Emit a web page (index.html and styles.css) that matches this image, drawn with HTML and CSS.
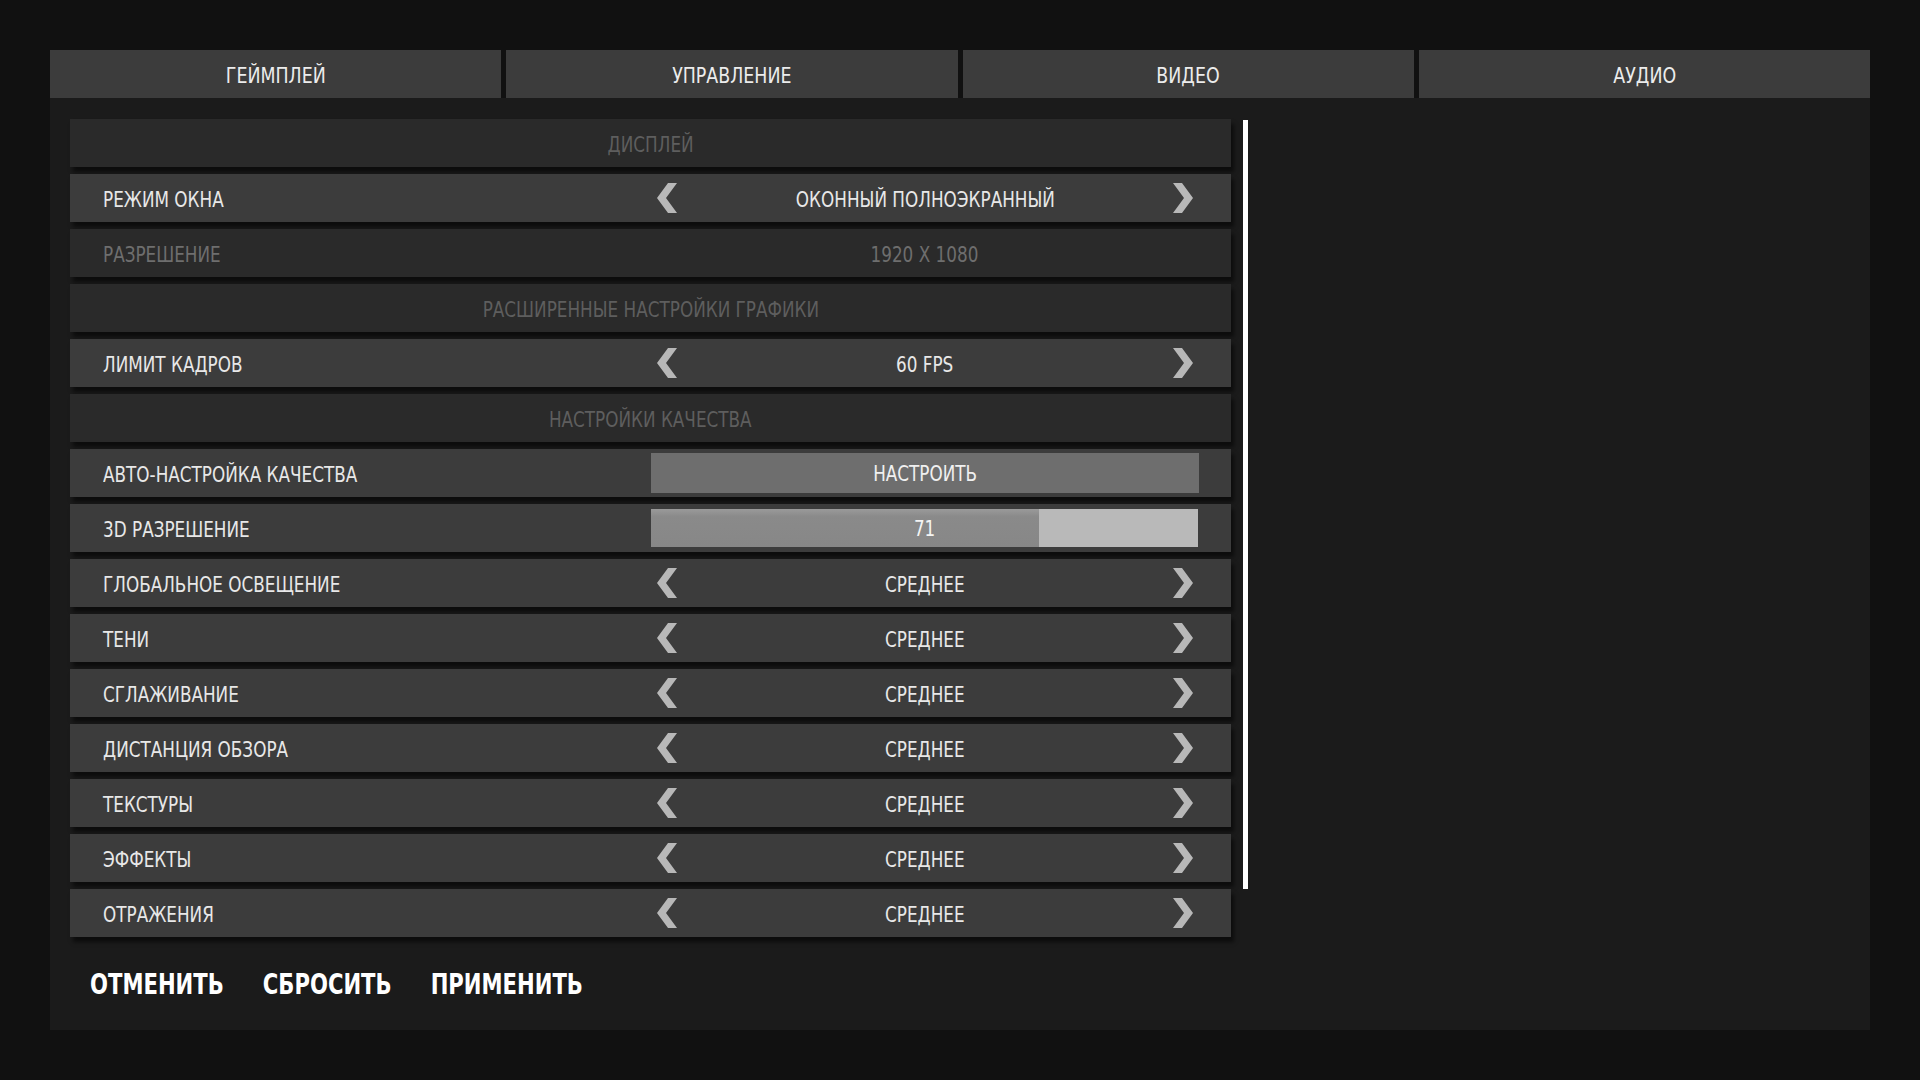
FILE: index.html
```html
<!DOCTYPE html>
<html lang="ru">
<head>
<meta charset="utf-8">
<title>Настройки</title>
<link rel="stylesheet" href="styles.css">
</head>
<body>
<div class="window">
  <div class="tabs">
    <div class="tab"><span class="t">ГЕЙМПЛЕЙ</span></div>
    <div class="tab"><span class="t">УПРАВЛЕНИЕ</span></div>
    <div class="tab"><span class="t">ВИДЕО</span></div>
    <div class="tab"><span class="t">АУДИО</span></div>
  </div>
  <div class="content">
    <div class="main">
      <div class="list">
        <div class="row head"><span class="t">ДИСПЛЕЙ</span></div>
        <div class="row">
          <div class="label"><span class="t">РЕЖИМ ОКНА</span></div>
          <div class="value">
            <svg class="arrow" viewBox="0 0 20 30"><polygon points="11,0 20,0 9,15 20,30 11,30 0,15"/></svg>
            <span class="t">ОКОННЫЙ ПОЛНОЭКРАННЫЙ</span>
            <svg class="arrow" viewBox="0 0 20 30"><polygon points="9,0 0,0 11,15 0,30 9,30 20,15"/></svg>
          </div>
        </div>
        <div class="row off">
          <div class="label"><span class="t">РАЗРЕШЕНИЕ</span></div>
          <div class="value center"><span class="t">1920 X 1080</span></div>
        </div>
        <div class="row head"><span class="t">РАСШИРЕННЫЕ НАСТРОЙКИ ГРАФИКИ</span></div>
        <div class="row">
          <div class="label"><span class="t">ЛИМИТ КАДРОВ</span></div>
          <div class="value">
            <svg class="arrow" viewBox="0 0 20 30"><polygon points="11,0 20,0 9,15 20,30 11,30 0,15"/></svg>
            <span class="t">60 FPS</span>
            <svg class="arrow" viewBox="0 0 20 30"><polygon points="9,0 0,0 11,15 0,30 9,30 20,15"/></svg>
          </div>
        </div>
        <div class="row head"><span class="t">НАСТРОЙКИ КАЧЕСТВА</span></div>
        <div class="row">
          <div class="label"><span class="t">АВТО-НАСТРОЙКА КАЧЕСТВА</span></div>
          <div class="value"><div class="btn"><span class="t">НАСТРОИТЬ</span></div></div>
        </div>
        <div class="row">
          <div class="label"><span class="t">3D РАЗРЕШЕНИЕ</span></div>
          <div class="value">
            <div class="slider"><div class="fill" style="width:71%"></div><span class="t num">71</span></div>
          </div>
        </div>
        <div class="row">
          <div class="label"><span class="t">ГЛОБАЛЬНОЕ ОСВЕЩЕНИЕ</span></div>
          <div class="value">
            <svg class="arrow" viewBox="0 0 20 30"><polygon points="11,0 20,0 9,15 20,30 11,30 0,15"/></svg>
            <span class="t">СРЕДНЕЕ</span>
            <svg class="arrow" viewBox="0 0 20 30"><polygon points="9,0 0,0 11,15 0,30 9,30 20,15"/></svg>
          </div>
        </div>
        <div class="row">
          <div class="label"><span class="t">ТЕНИ</span></div>
          <div class="value">
            <svg class="arrow" viewBox="0 0 20 30"><polygon points="11,0 20,0 9,15 20,30 11,30 0,15"/></svg>
            <span class="t">СРЕДНЕЕ</span>
            <svg class="arrow" viewBox="0 0 20 30"><polygon points="9,0 0,0 11,15 0,30 9,30 20,15"/></svg>
          </div>
        </div>
        <div class="row">
          <div class="label"><span class="t">СГЛАЖИВАНИЕ</span></div>
          <div class="value">
            <svg class="arrow" viewBox="0 0 20 30"><polygon points="11,0 20,0 9,15 20,30 11,30 0,15"/></svg>
            <span class="t">СРЕДНЕЕ</span>
            <svg class="arrow" viewBox="0 0 20 30"><polygon points="9,0 0,0 11,15 0,30 9,30 20,15"/></svg>
          </div>
        </div>
        <div class="row">
          <div class="label"><span class="t">ДИСТАНЦИЯ ОБЗОРА</span></div>
          <div class="value">
            <svg class="arrow" viewBox="0 0 20 30"><polygon points="11,0 20,0 9,15 20,30 11,30 0,15"/></svg>
            <span class="t">СРЕДНЕЕ</span>
            <svg class="arrow" viewBox="0 0 20 30"><polygon points="9,0 0,0 11,15 0,30 9,30 20,15"/></svg>
          </div>
        </div>
        <div class="row">
          <div class="label"><span class="t">ТЕКСТУРЫ</span></div>
          <div class="value">
            <svg class="arrow" viewBox="0 0 20 30"><polygon points="11,0 20,0 9,15 20,30 11,30 0,15"/></svg>
            <span class="t">СРЕДНЕЕ</span>
            <svg class="arrow" viewBox="0 0 20 30"><polygon points="9,0 0,0 11,15 0,30 9,30 20,15"/></svg>
          </div>
        </div>
        <div class="row">
          <div class="label"><span class="t">ЭФФЕКТЫ</span></div>
          <div class="value">
            <svg class="arrow" viewBox="0 0 20 30"><polygon points="11,0 20,0 9,15 20,30 11,30 0,15"/></svg>
            <span class="t">СРЕДНЕЕ</span>
            <svg class="arrow" viewBox="0 0 20 30"><polygon points="9,0 0,0 11,15 0,30 9,30 20,15"/></svg>
          </div>
        </div>
        <div class="row">
          <div class="label"><span class="t">ОТРАЖЕНИЯ</span></div>
          <div class="value">
            <svg class="arrow" viewBox="0 0 20 30"><polygon points="11,0 20,0 9,15 20,30 11,30 0,15"/></svg>
            <span class="t">СРЕДНЕЕ</span>
            <svg class="arrow" viewBox="0 0 20 30"><polygon points="9,0 0,0 11,15 0,30 9,30 20,15"/></svg>
          </div>
        </div>
      </div>
      <div class="scrollbar"></div>
    </div>
    <div class="footer">
      <div class="action"><span class="tf">ОТМЕНИТЬ</span></div>
      <div class="action"><span class="tf">СБРОСИТЬ</span></div>
      <div class="action"><span class="tf">ПРИМЕНИТЬ</span></div>
    </div>
  </div>
</div>
</body>
</html>
```
FILE: styles.css
```css
html, body {
  margin: 0;
  padding: 0;
}
body {
  background: #111111;
  font-family: "DejaVu Sans Condensed", "DejaVu Sans", sans-serif;
  color: #e8e8e8;
  width: 1920px;
  height: 1080px;
  overflow: hidden;
}
.t {
  display: inline-block;
  white-space: nowrap;
  transform: scaleX(0.85);
}
.window {
  margin: 50px;
  width: 1820px;
  height: 980px;
  display: flex;
  flex-direction: column;
}
.tabs {
  display: grid;
  grid-template-columns: repeat(4, 1fr);
  gap: 5px;
  height: 48px;
  flex: none;
}
.tab {
  background: #3c3c3c;
  display: flex;
  align-items: center;
  justify-content: center;
  font-size: 22px;
  color: #ececec;
  padding-top: 2px;
}
.tab .t {
  transform: scaleX(0.88);
}
.content {
  flex: 1;
  background: #1b1b1b;
  padding: 21px 20px 0 20px;
  display: flex;
  flex-direction: column;
}
.main {
  display: flex;
  gap: 12px;
  align-items: flex-start;
}
.list {
  width: 1161px;
  display: flex;
  flex-direction: column;
  gap: 7px;
}
.scrollbar {
  width: 5px;
  height: 769px;
  background: #ffffff;
  margin-top: 1px;
}
.row {
  height: 48px;
  background: #3c3c3c;
  display: grid;
  grid-template-columns: 580px 1fr;
  align-items: center;
  font-size: 22px;
  box-shadow: 3px 5px 4px rgba(0, 0, 0, 0.55);
}
.row.head {
  display: flex;
  justify-content: center;
  background: #2a2a2a;
  color: #5e5e5e;
  padding-top: 2px;
  box-sizing: border-box;
}
.row.off {
  background: #2a2a2a;
  color: #6e6e6e;
}
.label {
  padding-left: 33px;
  padding-top: 2px;
}
.label .t {
  transform-origin: left center;
}
.value {
  display: flex;
  align-items: center;
  justify-content: space-between;
  padding: 0 38px 0 7px;
  height: 100%;
}
.value > .t {
  padding-top: 2px;
}
.value.center {
  justify-content: center;
  padding: 0 32px 0 0;
}
.arrow {
  width: 20px;
  height: 30px;
  fill: #b8b8b8;
  flex: none;
}
.btn {
  flex: 1;
  margin: 0 -6px 0 -6px;
  height: 40px;
  background: #6e6e6e;
  display: flex;
  align-items: center;
  justify-content: center;
  color: #f0f0f0;
}
.slider {
  flex: 1;
  margin: 0 -5px 0 -6px;
  height: 38px;
  background: #b9b9b9;
  position: relative;
  display: flex;
  align-items: center;
  justify-content: center;
}
.fill {
  position: absolute;
  left: 0;
  top: 0;
  bottom: 0;
  background: linear-gradient(#9a9a9a, #8a8a8a 20%, #878787);
}
.num {
  position: relative;
  color: #f4f4f4;
}
.footer {
  display: flex;
  gap: 39px;
  padding: 29px 0 0 20px;
}
.action {
  font-size: 23.5px;
  font-weight: bold;
  line-height: 36px;
  color: #ffffff;
}
.tf {
  display: inline-block;
  white-space: nowrap;
  transform: scaleY(1.24);
}
```
